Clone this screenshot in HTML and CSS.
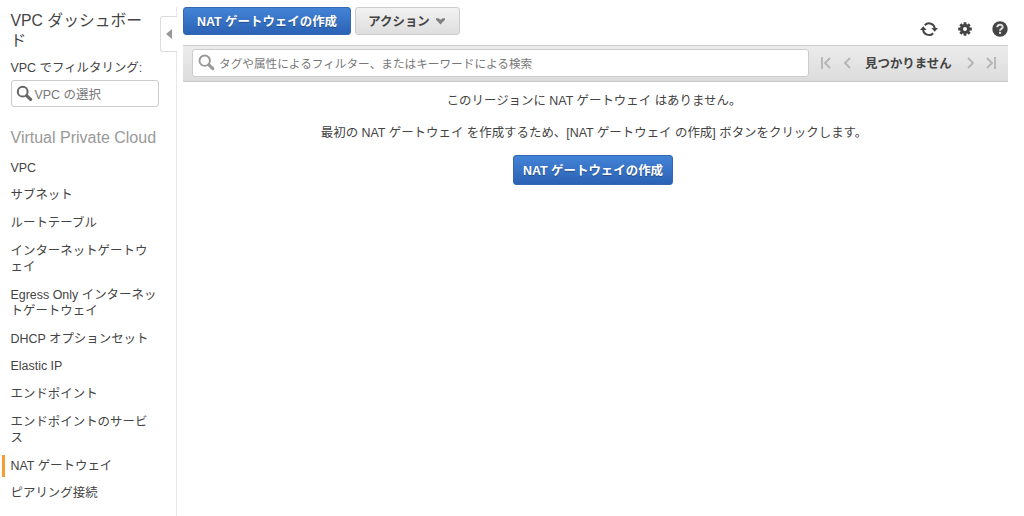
FILE: index.html
```html
<!DOCTYPE html>
<html lang="ja">
<head>
<meta charset="UTF-8">
<meta name="viewport" content="width=device-width, initial-scale=1.0">
<title>VPC ダッシュボード</title>
<link rel="stylesheet" href="styles.css">
</head>
<body>

<div class="page">
  <aside class="sidebar">
    <h1 class="title">VPC ダッシュボー<br>ド</h1>
    <div class="filter-label">VPC でフィルタリング:</div>
    <div class="vpc-select">
      <svg class="search-icon" width="17" height="17" viewBox="0 0 17 17"><circle cx="6.7" cy="6.7" r="4.9" fill="none" stroke="#666" stroke-width="2"/><path d="M10.6 10.6L14.6 14.4" stroke="#666" stroke-width="3.2" stroke-linecap="round"/></svg>
      <span>VPC の選択</span>
    </div>
    <h2 class="section">Virtual Private Cloud</h2>
    <ul class="menu">
      <li>VPC</li>
      <li>サブネット</li>
      <li>ルートテーブル</li>
      <li>インターネットゲートウ<br>ェイ</li>
      <li>Egress Only インターネッ<br>トゲートウェイ</li>
      <li>DHCP オプションセット</li>
      <li>Elastic IP</li>
      <li>エンドポイント</li>
      <li>エンドポイントのサービ<br>ス</li>
      <li class="active">NAT ゲートウェイ</li>
      <li>ピアリング接続</li>
    </ul>
    <div class="collapse"><svg width="6" height="10" viewBox="0 0 6 10"><path d="M6 0V10L0 5Z" fill="#999"/></svg></div>
  </aside>

  <main class="main">
    <div class="actions">
      <button class="btn btn-primary">NAT ゲートウェイの作成</button>
      <button class="btn btn-default">アクション
        <svg width="9" height="7" viewBox="0 0 9 7"><path d="M0 .3H2.4L4.5 1.8L6.6 .3H9V1.8L4.5 6.5L0 1.8Z" fill="#808080"/></svg>
      </button>
      <div class="tools">
        <svg width="18" height="16" viewBox="0 0 18 16"><g fill="none" stroke="#444" stroke-width="2"><path d="M4.8 4.2A5.8 5.8 0 0 1 14.8 7.8"/><path d="M13.2 12.2A5.8 5.8 0 0 1 3.2 8.6"/></g><path d="M11.4 7H18L14.7 10.8ZM0 9H6.6L3.3 5.2Z" fill="#444"/></svg>
        <svg width="14" height="14" viewBox="0 0 14 14"><g stroke="#444" stroke-width="2.8"><path d="M7 .2V13.8M.2 7H13.8M2.3 2.3L11.7 11.7M11.7 2.3L2.3 11.7"/></g><circle cx="7" cy="7" r="5" fill="#444"/><circle cx="7" cy="7" r="2" fill="#fff"/></svg>
        <svg width="16" height="16" viewBox="0 0 16 16"><circle cx="8" cy="8" r="7.7" fill="#444"/><path d="M5.3 6.2C5.3 2.9 10.7 2.9 10.7 6.1C10.7 8 8 7.9 8 9.8" fill="none" stroke="#ddd" stroke-width="2"/><rect x="7" y="10.8" width="2.1" height="2.1" fill="#ddd"/></svg>
      </div>
    </div>

    <div class="toolbar">
      <div class="search">
        <svg class="search-icon" width="17" height="17" viewBox="0 0 17 17"><circle cx="6.7" cy="6.7" r="5.2" fill="none" stroke="#999" stroke-width="1.9"/><path d="M10.9 10.9L14.8 14.6" stroke="#999" stroke-width="3" stroke-linecap="round"/></svg>
        <span>タグや属性によるフィルター、またはキーワードによる検索</span>
      </div>
      <div class="pager">
        <svg width="10" height="12" viewBox="0 0 10 12"><path d="M1 0V12M9 1L4 6L9 11"/></svg>
        <svg class="prev" width="7" height="12" viewBox="0 0 7 12"><path d="M6 1L1 6L6 11"/></svg>
        <span class="pager-text">見つかりません</span>
        <svg class="next" width="7" height="12" viewBox="0 0 7 12"><path d="M1 1L6 6L1 11"/></svg>
        <svg width="10" height="12" viewBox="0 0 10 12"><path d="M1 1L6 6L1 11M9 0V12"/></svg>
      </div>
    </div>

    <div class="empty">
      <p>このリージョンに NAT ゲートウェイ はありません。</p>
      <p>最初の NAT ゲートウェイ を作成するため、[NAT ゲートウェイ の作成] ボタンをクリックします。</p>
      <button class="btn btn-primary btn-create">NAT ゲートウェイの作成</button>
    </div>
  </main>
</div>

</body>
</html>
```
FILE: styles.css
```css
body {
  margin: 0;
  font-family: "Liberation Sans", "Noto Sans CJK JP", sans-serif;
  font-size: 12.45px;
  color: #444;
  background-color: #fff;
}
.page {
  display: flex;
  height: 516px;
  overflow: hidden;
}
svg {
  display: block;
  flex: none;
}

/* sidebar */
.sidebar {
  position: relative;
  width: 165.5px;
  margin-top: 7px;
  padding: 4px 0 0 10.5px;
  border-right: 1px solid #e8e8e8;
  white-space: nowrap;
}
.title {
  margin: 0;
  font-size: 15.8px;
  font-weight: normal;
  line-height: 20px;
}
.filter-label {
  margin-top: 8px;
  line-height: 18px;
}
.vpc-select {
  display: flex;
  align-items: center;
  gap: 2px;
  width: 148px;
  height: 27px;
  margin-top: 3px;
  padding-left: 4px;
  box-sizing: border-box;
  border: 1px solid #ccc;
  border-radius: 3px;
  color: #777;
}
.section {
  margin: 21px 0 0;
  font-size: 16px;
  font-weight: normal;
  line-height: 20px;
  color: #999;
}
.menu {
  margin: 11.6px 0 0;
  padding: 0;
  list-style: none;
}
.menu li {
  margin-bottom: 11.5px;
  line-height: 16.2px;
}
.menu .active {
  margin: -3px 0 8.5px -8.5px;
  padding: 3px 0 3px 8.5px;
  background: linear-gradient(#f79c34, #f79c34) no-repeat 0 0 / 3px 100%;
}
.collapse {
  position: absolute;
  top: 9px;
  right: -1px;
  display: flex;
  align-items: center;
  justify-content: center;
  width: 16px;
  height: 34px;
  border: 1px solid #ddd;
  border-right: none;
  border-radius: 3px 0 0 3px;
  background-color: #fff;
}

/* main */
.main {
  flex: 1;
  padding: 7px 16px 0 6px;
}
.actions {
  display: flex;
  gap: 4px;
  height: 38px;
}
.btn {
  display: flex;
  align-items: center;
  justify-content: center;
  height: 28px;
  padding: 0;
  border-radius: 3px;
  font-family: inherit;
  font-size: 12.45px;
  font-weight: bold;
  white-space: nowrap;
  cursor: pointer;
}
.btn-primary {
  width: 168px;
  border: 1px solid #3468b4;
  color: #fff;
  background: linear-gradient(#4383d6, #2b62b5);
  text-shadow: 0 1px 1px rgba(0,0,0,0.3);
}
.btn-default {
  gap: 6px;
  width: 105px;
  padding-right: 2px;
  border: 1px solid #ccc;
  color: #444;
  background: linear-gradient(#f2f2f2, #dedede);
}
.tools {
  display: flex;
  align-items: center;
  margin: 14px 0 0 auto;
  height: 16px;
  gap: 20px;
}
.toolbar {
  display: flex;
  align-items: center;
  height: 37px;
  padding: 0 0 2px 9px;
  box-sizing: border-box;
  border-top: 1px solid #ccc;
  border-bottom: 1px solid #c8c8c8;
  background: linear-gradient(#ececec, #dcdcdc);
}
.search {
  display: flex;
  align-items: center;
  gap: 4px;
  width: 617px;
  height: 28px;
  padding-left: 5px;
  box-sizing: border-box;
  border: 1px solid #ccc;
  border-radius: 3px;
  font-size: 11.65px;
  color: #777;
  background-color: #fff;
}
.search span {
  padding-bottom: 1px;
}
.pager {
  display: flex;
  align-items: center;
  margin-left: 12px;
  font-weight: bold;
}
.pager path {
  fill: none;
  stroke: #b4b4b4;
  stroke-width: 1.8;
}
.prev {
  margin-left: 13px;
}
.pager-text {
  margin: 0 15px 0 14px;
}
.next {
  margin-right: 12px;
}
.empty {
  display: flex;
  flex-direction: column;
  align-items: center;
  padding: 11px 3px 0 0;
}
.empty p {
  margin: 0 0 16px;
  line-height: 16px;
}
.btn-create {
  width: 160px;
  height: 30px;
  margin: -2px 2px 0 0;
}
```
